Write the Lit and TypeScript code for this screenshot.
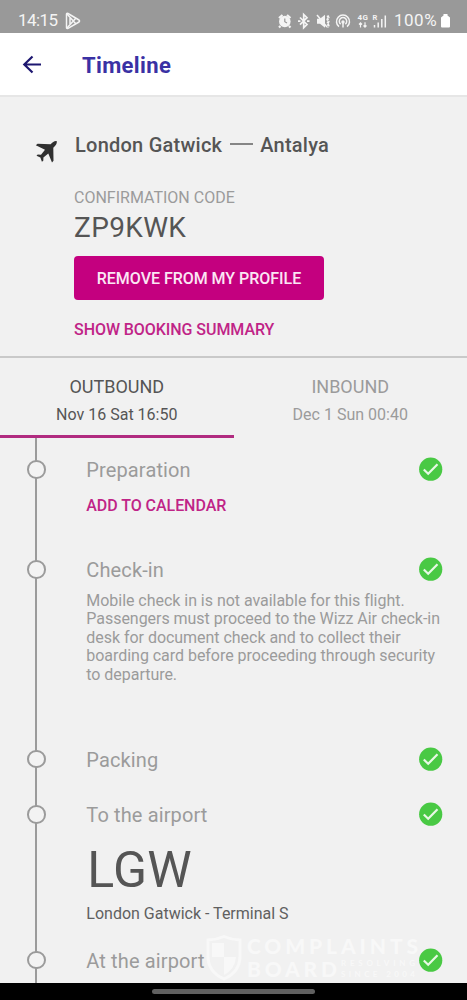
import { LitElement, html, css, nothing } from "lit";
import { customElement, property, state } from "lit/decorators.js";

@customElement("status-bar")
class StatusBar extends LitElement {
  static styles = css`
    :host { display: flex; justify-content: space-between; height: 33px; background: #999; color: #f4f4f4; box-sizing: border-box; padding: 8px 16px 0 18px; font-size: 17px; line-height: 25px; }
    .left, .right { display: flex; align-items: center; height: 25px; }
    .time { letter-spacing: -0.6px; width: 47px; }
    .pct { letter-spacing: 0.5px; width: 46px; white-space: nowrap; }
    svg { display: block; }
  `;
  render() {
    return html`
      <div class="left">
        <span class="time">14:15</span>
        <svg width="16" height="18" viewBox="0 0 16 18" fill="none" stroke="#f4f4f4" stroke-width="1.5" stroke-linejoin="round">
          <path d="M1.5 2.3Q1.5 1 3 1.5L14 8Q15 9 14 10L3 16.3Q1.500 17 1.500 15.500Z"/><path d="M2 2L11 12M2 16L11 6M5 6v6"/>
        </svg>
      </div>
      <div class="right">
        <svg width="116" height="18" viewBox="278.500 11.500 116 18" fill="none" stroke="#f4f4f4" stroke-width="1.500">
          <circle cx="285.300" cy="21" r="5.800" fill="#f4f4f4" stroke="none"/>
          <path d="M279.500 17.500l3.500-3M291 17.500l-3.500-3M281 25.500l-1.500 1.500M289.500 25.500l1.500 1.500" stroke-width="2.200"/>
          <path d="M285.300 18v3.200l2.200 1.300" stroke="#999" stroke-width="1.200"/>
          <path d="M300.500 17l7 7-3.300 3.200V14l3.300 3.200-7 7M298.500 20.600h2.500M307.500 20.600h2.500" stroke-width="1.700"/>
          <path d="M317.500 18.300h3l5-4v13l-5-4h-3z" fill="#f4f4f4" stroke="none"/>
          <path d="M317.500 14.500l10 12" stroke-width="1.500"/>
          <path d="M328 15l1 2-1 2 1 2-1 2 1 2-1 2" stroke-width="2.200" stroke-dasharray="2.500 .7"/>
          <path d="M339.500 26.200a6.500 6.500 0 1 1 8 0M341.200 23.700a3.700 3.700 0 1 1 4.600 0"/>
          <circle cx="343.500" cy="21.500" r="1.700" fill="#f4f4f4" stroke="none"/><path d="M343.500 22v5"/>
          <text x="358" y="19.800" font-size="8" font-weight="700" fill="#f4f4f4" stroke="none" textLength="10.500">4G</text>
          <path d="M361 27v-5M359.500 24l1.500-1.700 1.500 1.700M365.500 21.700v5M364 25l1.500 1.700 1.500-1.700" stroke-width="1.200"/>
          <text x="373" y="19" font-size="7.500" font-weight="700" fill="#f4f4f4" stroke="none">R</text>
          <path d="M375 27v-2.500M378.700 27v-5M382.300 27v-8.500M385.800 27v-12" stroke-width="1.500"/>
        </svg>
        <span class="pct">100%</span>
        <svg width="11" height="15" viewBox="0 0 11 15"><path d="M3.500 1h4v1.500l2.500 2V13.500q0 1-1 1H2q-1 0-1-1V4.500l2.500-2z" fill="#fff"/></svg>
      </div>`;
  }
}

interface Step {
  title: string;
  height: number;
  action?: string;
  note?: string[];
  code?: string;
  place?: string;
}

@customElement("timeline-step")
class TimelineStep extends LitElement {
  @property({ attribute: false }) step!: Step;
  static styles = css`
    :host { display: grid; grid-template-columns: 86.300px 1fr 48px; height: 100%; color: #9b9b9b; }
    .rail { background: linear-gradient(#9b9b9b, #9b9b9b) 35px 0 / 2.300px 100% no-repeat; padding: 22px 0 0 27px; }
    .dot { box-sizing: border-box; width: 18.500px; height: 18.500px; border: 2.500px solid #9b9b9b; border-radius: 50%; background: #f3f3f3; }
    .body { padding-top: 20px; min-width: 0; white-space: nowrap; }
    .title { font-size: 20px; line-height: 24px; letter-spacing: 0.130px; }
    .action { font-size: 16px; line-height: 20px; margin-top: 14px; font-weight: 500; letter-spacing: -0.050px; color: #c02487; }
    .note { font-size: 16px; line-height: 18.500px; margin-top: 9.600px; letter-spacing: -0.035px; }
    .code { font-size: 50px; line-height: 58px; margin-top: 14px; padding-left: 1px; letter-spacing: 0.300px; color: #555; }
    .place { font-size: 16px; line-height: 20px; margin-top: 5px; color: #606060; }
    .check { padding: 19px 0 0; }
    svg { display: block; }
  `;
  render() {
    const s = this.step;
    return html`
      <div class="rail"><div class="dot"></div></div>
      <div class="body">
        <div class="title">${s.title}</div>
        ${s.action ? html`<div class="action">${s.action}</div>` : nothing}
        ${s.note ? html`<div class="note">${s.note.map((l) => html`<div>${l}</div>`)}</div>` : nothing}
        ${s.code ? html`<div class="code">${s.code}</div>` : nothing}
        ${s.place ? html`<div class="place">${s.place}</div>` : nothing}
      </div>
      <div class="check">
        <svg width="24" height="24" viewBox="0 0 24 24"><circle cx="11.700" cy="12.200" r="11.600" fill="#49c944"/><path d="M4.800 12.500l4.400 4.300 9.300-9.500" fill="none" stroke="#e8f8e5" stroke-width="2.200"/></svg>
      </div>`;
  }
}

@customElement("app-root")
class AppRoot extends LitElement {
  @state() private steps: Step[] = [
    { title: "Preparation", height: 100, action: "ADD TO CALENDAR" },
    {
      title: "Check-in", height: 189.5,
      note: [
        "Mobile check in is not available for this flight.",
        "Passengers must proceed to the Wizz Air check-in",
        "desk for document check and to collect their",
        "boarding card before proceeding through security",
        "to departure.",
      ],
    },
    { title: "Packing", height: 55.5 },
    { title: "To the airport", height: 145.5, code: "LGW", place: "London Gatwick - Terminal S" },
    { title: "At the airport", height: 54.5 },
  ];

  static styles = css`
    :host { display: flex; flex-direction: column; position: relative; width: 467px; height: 1000px; overflow: hidden; background: #f1f1f1; font-family: Roboto, sans-serif; color: #555; }
    header { display: flex; align-items: center; flex: none; height: 62px; background: #fff; border-bottom: 2px solid #e6e6e6; padding-left: 22px; box-sizing: content-box; }
    .back { display: block; width: 60px; height: 22px; }
    h1 { margin: 4px 0 0; font-size: 22px; line-height: 26px; font-weight: 700; letter-spacing: 0.370px; color: #3a31a4; }
    .booking { display: grid; grid-template-columns: 74px 1fr; height: 259px; flex: none; white-space: nowrap; }
    .plane { padding: 42px 0 0 35px; }
    .details { padding-top: 36px; display: flex; flex-direction: column; align-items: flex-start; }
    .route { display: flex; align-items: center; font-size: 20px; line-height: 24px; font-weight: 500; letter-spacing: 0.240px; padding-left: 1px; }
    .dash { width: 23px; height: 2px; background: #868686; margin: -2px 7px 0 8px; }
    .label { margin-top: 31px; font-size: 16px; line-height: 20px; color: #9b9b9b; }
    .pnr { margin-top: 3px; font-size: 28px; line-height: 34px; letter-spacing: 0.350px; }
    .remove { margin-top: 11px; box-sizing: border-box; width: 250px; height: 44px; border: 0; border-radius: 4px; background: #c4007f; color: #fbe6f4; font: 500 16px/44px Roboto, sans-serif; letter-spacing: -0.030px; padding: 1px 0 0; text-align: center; }
    .summary { margin-top: 20px; font-size: 16px; line-height: 20px; font-weight: 500; letter-spacing: -0.060px; color: #c02487; }
    .tabs { display: grid; grid-template-columns: 233.500px 233.500px; flex: none; height: 82px; box-sizing: border-box; border-top: 2px solid #c9c9c9; text-align: center; }
    .tab { padding-top: 17px; border-bottom: 3px solid transparent; color: #9b9b9b; }
    .tab.active { color: #555; border-bottom-color: #b12b80; }
    .dir { font-size: 18px; line-height: 24px; }
    .date { font-size: 16px; line-height: 20px; margin-top: 6px; }
    .steps { flex: none; height: 545px; }
    .nav { flex: none; height: 17px; background: #000; display: flex; justify-content: center; padding-top: 6px; box-sizing: border-box; }
    .pill { width: 163px; height: 5px; border-radius: 3px; background: #606060; }
    .mark { position: absolute; left: 205px; top: 930px; }
  `;

  render() {
    return html`
      <status-bar></status-bar>
      <header>
        <svg class="back" viewBox="0 0 60 22" fill="none" stroke="#1d1770" stroke-width="2.200"><path d="M19 11.500H2.500M10.500 3.500L2.300 11.500l8.200 8"/></svg>
        <h1>Timeline</h1>
      </header>
      <section class="booking">
        <div class="plane">
          <svg width="24" height="26" viewBox="0 0 24 26"><path d="M21.800 2.200c-2.200-.5-4.200 1-6.200 3L2.600 4.700.8 6.200l9.200 4.500-4 5-3.300-.3-1.200 1.300 3.900 1.800 1.500 4.200 1.400-1 .1-3.300 4.900-3.900 3.700 9 1.500-1.700-.2-13C20.300 6.700 22.300 4.500 21.800 2.200Z" fill="#303030"/></svg>
        </div>
        <div class="details">
          <div class="route"><span>London Gatwick</span><i class="dash"></i><span>Antalya</span></div>
          <div class="label">CONFIRMATION CODE</div>
          <div class="pnr">ZP9KWK</div>
          <button class="remove">REMOVE FROM MY PROFILE</button>
          <div class="summary">SHOW BOOKING SUMMARY</div>
        </div>
      </section>
      <nav class="tabs">
        <div class="tab active"><div class="dir">OUTBOUND</div><div class="date">Nov 16 Sat 16:50</div></div>
        <div class="tab"><div class="dir">INBOUND</div><div class="date">Dec 1 Sun 00:40</div></div>
      </nav>
      <main class="steps">
        ${this.steps.map((s) => html`<div style="height:${s.height}px"><timeline-step .step=${s}></timeline-step></div>`)}
      </main>
      <div class="nav"><div class="pill"></div></div>
      <svg class="mark" width="218" height="52" viewBox="0 -4 218 52" fill="#f8f8f8">
        <path d="M19 2.500Q27 6 35 6V22Q35 38 19 45Q3 38 3 22V6Q11 6 19 2.500Z" fill="none" stroke="#f8f8f8" stroke-width="3"/>
        <path d="M7 9h12v14H7zM19 23h12q-1 12-12 18z"/>
        <text x="42" y="19.500" font-size="21" font-family="Lato" font-weight="900" textLength="171">COMPLAINTS</text>
        <text x="42" y="43" font-size="21" font-family="Lato" font-weight="900" textLength="90">BOARD</text>
        <text x="136" y="31.500" font-size="8" font-family="Lato" font-weight="700" textLength="74">RESOLVING</text>
        <text x="136" y="43" font-size="8" font-family="Lato" font-weight="700" textLength="74">SINCE 2004</text>
      </svg>`;
  }
}
